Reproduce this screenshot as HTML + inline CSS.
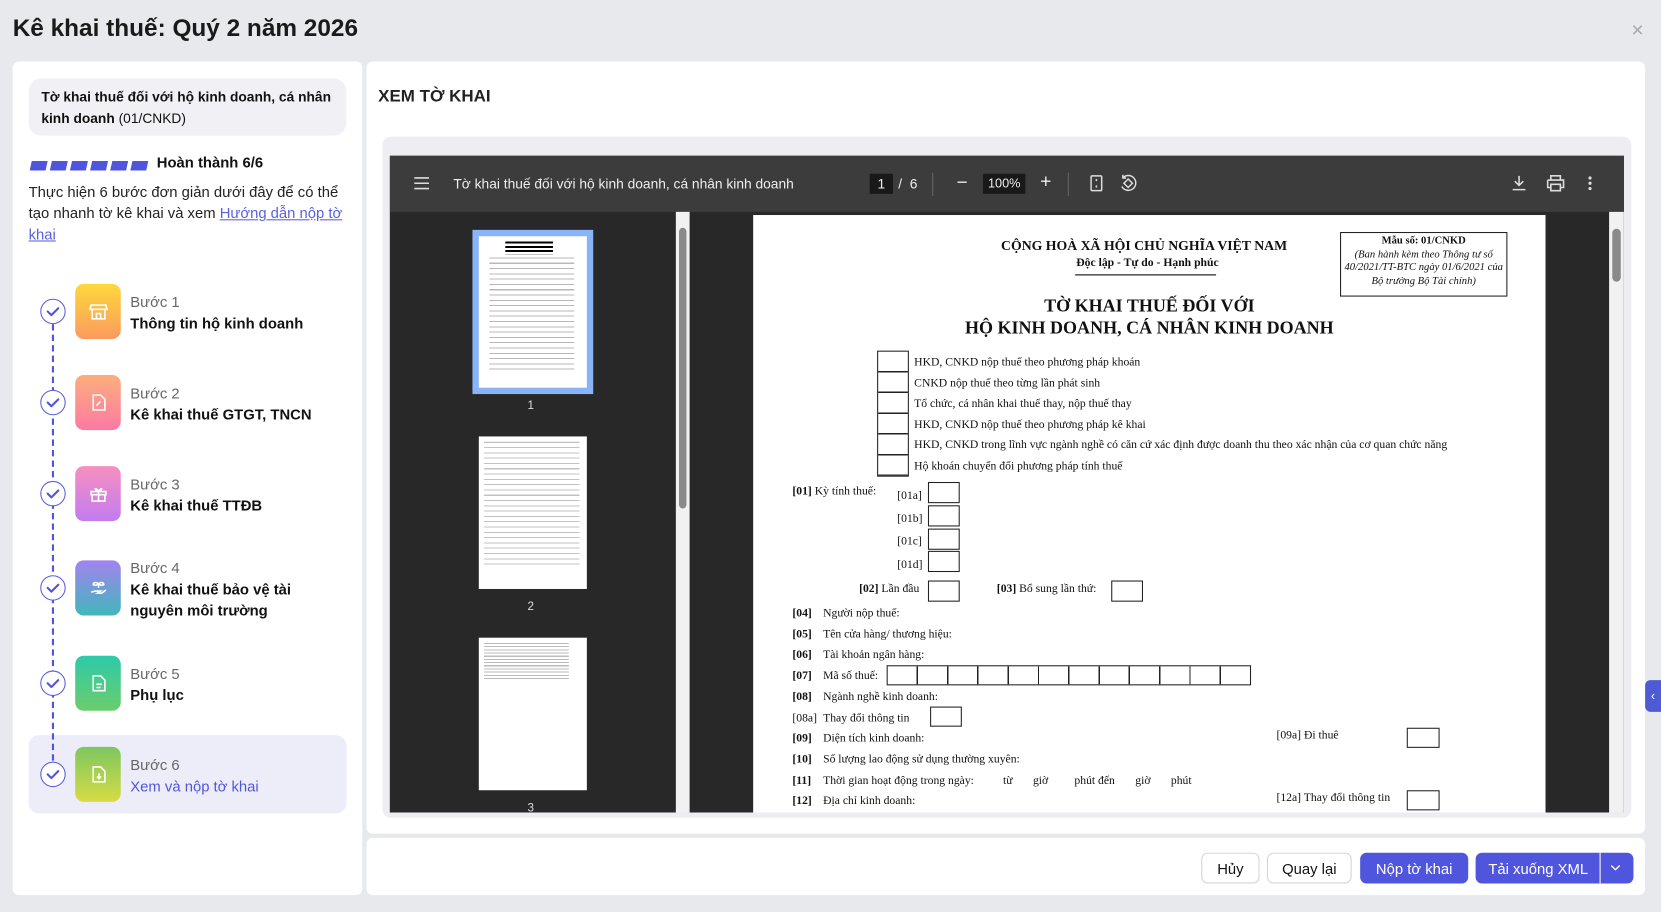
<!DOCTYPE html>
<html><head><meta charset="utf-8"><style>
*{box-sizing:border-box;margin:0;padding:0}
html,body{width:1661px;height:912px;overflow:hidden;background:#e8e9ed}
#w{position:absolute;left:0;top:0;width:1568px;height:861px;transform:scale(1.05931);transform-origin:0 0;font-family:"Liberation Sans",Arial,sans-serif;color:#111}
.a{position:absolute}
.sf{font-family:"Liberation Serif","Times New Roman",serif;color:#111;white-space:nowrap}
.bx{position:absolute;border:1.3px solid #222;background:#fff}
.ic{position:absolute;left:71px;width:43px;height:52px;border-radius:8px;display:flex;align-items:center;justify-content:center}
.ck{position:absolute;left:38px;width:24px;height:24px;border:1.5px solid #5a5fdc;border-radius:50%;background:#fff}
.st{position:absolute;left:123px;font-size:14px;line-height:20px}
.st .g{color:#666}
.st b{font-weight:700;color:#111}
.btn{position:absolute;top:805px;height:29px;border-radius:6px;font-size:14px;display:flex;align-items:center;justify-content:center}
.tb{color:#eee;font-size:13px}
</style></head><body><div id="w">
<div class="a" style="left:12px;top:13px;font-size:23px;font-weight:700;color:#1a1a1a">Kê khai thuế: Quý 2 năm 2026</div>
<div class="a" style="left:1540px;top:18px;font-size:20px;color:#aaa">×</div>

<div class="a" style="left:12px;top:58px;width:330px;height:787px;background:#fff;border-radius:6px"></div>
<div class="a" style="left:27px;top:74px;width:300px;height:54px;background:#f1f1f5;border-radius:12px;padding:8px 12px;font-size:13px;line-height:20px"><b>Tờ khai thuế đối với hộ kinh doanh, cá nhân kinh doanh</b> (01/CNKD)</div>
<div class="a" style="left:28px;top:148px">
<svg width="112" height="9"><g fill="#5055dd"><polygon points="2,0 17,0 15,9 0,9"/><polygon points="21,0 36,0 34,9 19,9"/><polygon points="40,0 55,0 53,9 38,9"/><polygon points="59,0 74,0 72,9 57,9"/><polygon points="78,0 93,0 91,9 76,9"/><polygon points="97,0 112,0 110,9 95,9"/></g></svg></div>
<div class="a" style="left:148px;top:145px;font-size:14px;font-weight:700">Hoàn thành 6/6</div>
<div class="a" style="left:27px;top:171px;width:300px;font-size:14px;line-height:20px;color:#222">Thực hiện 6 bước đơn giản dưới đây để có thể tạo nhanh tờ kê khai và xem <span style="color:#5a5fdc;text-decoration:underline">Hướng dẫn nộp tờ khai</span></div>

<div class="a" style="left:27px;top:694px;width:300px;height:74px;background:#ededfa;border-radius:10px"></div>
<div class="a" style="left:49px;top:306px;height:412px;border-left:2px dashed #5055dd"></div>

<div class="ck" style="top:282px"></div><div class="ck" style="top:368px"></div><div class="ck" style="top:454px"></div><div class="ck" style="top:543px"></div><div class="ck" style="top:633px"></div><div class="ck" style="top:719px"></div>
<svg class="a" style="left:38px;top:0" width="24" height="760"><g fill="none" stroke="#5055dd" stroke-width="2" stroke-linecap="round" stroke-linejoin="round"><path d="M7 294l3.5 3.5 6.5-6.5"/><path d="M7 380l3.5 3.5 6.5-6.5"/><path d="M7 466l3.5 3.5 6.5-6.5"/><path d="M7 555l3.5 3.5 6.5-6.5"/><path d="M7 645l3.5 3.5 6.5-6.5"/><path d="M7 731l3.5 3.5 6.5-6.5"/></g></svg>

<div class="ic" style="top:268px;background:linear-gradient(#fdd93a,#fb9a5e)"><svg width="18" height="18" fill="none" stroke="#fff" stroke-width="1.5"><path d="M2 3h14l1 4H1zM3 7v9h12V7M7 16v-5h4v5"/></svg></div>
<div class="ic" style="top:354px;background:linear-gradient(#fdae7c,#fb7aa3)"><svg width="18" height="18" fill="none" stroke="#fff" stroke-width="1.5"><path d="M4 2h7l4 4v10H4zM7 12l4-4"/></svg></div>
<div class="ic" style="top:440px;background:linear-gradient(#f78fbf,#c27cf0)"><svg width="18" height="18" fill="none" stroke="#fff" stroke-width="1.5"><path d="M2 7h14v3H2zM3 10v6h12v-6M9 7v9M9 7C6 2 4 5 9 7c5-2 3-5 0 0"/></svg></div>
<div class="ic" style="top:529px;background:linear-gradient(#a283ef,#42b6bc)"><svg width="18" height="18" fill="none" stroke="#fff" stroke-width="1.5"><path d="M9 9V4M9 5c-3-2-5-1-5 1 3 1 4 0 5-1zm0 0c3-2 5-1 5 1-3 1-4 0-5-1M2 13l4-1h5l-3 2h4l4-3"/></svg></div>
<div class="ic" style="top:619px;background:linear-gradient(#2ccba8,#6ccc6c)"><svg width="18" height="18" fill="none" stroke="#fff" stroke-width="1.5"><path d="M4 2h7l4 4v10H4zM7 10h5M7 13h4"/></svg></div>
<div class="ic" style="top:705px;background:linear-gradient(#7ec660,#d7dc45)"><svg width="18" height="18" fill="none" stroke="#fff" stroke-width="1.5"><path d="M4 2h7l4 4v10H4zM9.5 8v5M7.5 11l2 2 2-2"/></svg></div>

<div class="st" style="top:275px"><span class="g">Bước 1</span><br><b>Thông tin hộ kinh doanh</b></div>
<div class="st" style="top:361px"><span class="g">Bước 2</span><br><b>Kê khai thuế GTGT, TNCN</b></div>
<div class="st" style="top:447px"><span class="g">Bước 3</span><br><b>Kê khai thuế TTĐB</b></div>
<div class="st" style="top:526px"><span class="g">Bước 4</span><br><b>Kê khai thuế bảo vệ tài<br>nguyên môi trường</b></div>
<div class="st" style="top:626px"><span class="g">Bước 5</span><br><b>Phụ lục</b></div>
<div class="st" style="top:712px"><span class="g">Bước 6</span><br><span style="color:#5055dd">Xem và nộp tờ khai</span></div>

<div class="a" style="left:346px;top:58px;width:1207px;height:729px;background:#fff;border-radius:6px"></div>
<div class="a" style="left:346px;top:791px;width:1207px;height:54px;background:#fff;border-radius:6px"></div>
<div class="a" style="left:357px;top:83px;font-size:16px;font-weight:700;color:#222">XEM TỜ KHAI</div>
<div class="a" style="left:361px;top:129px;width:1179px;height:643px;background:#ededf2;border-radius:8px"></div>
<div class="a" style="left:368px;top:147px;width:1165px;height:620px;background:#282828;overflow:hidden">
 <div class="a" style="left:0;top:0;width:1165px;height:53px;background:#3c3c3c"></div>
 <svg class="a" style="left:23px;top:20px" width="14" height="12"><path d="M0 1h14M0 6h14M0 11h14" stroke="#ddd" stroke-width="1.5"/></svg>
 <div class="a tb" style="left:60px;top:19px">Tờ khai thuế đối với hộ kinh doanh, cá nhân kinh doanh</div>
 <div class="a tb" style="left:453px;top:17px;width:22px;height:19px;background:#191919;text-align:center;line-height:19px">1</div>
 <div class="a tb" style="left:480px;top:19px">/ &nbsp;6</div>
 <div class="a" style="left:512px;top:16px;width:1px;height:22px;background:#666"></div>
 <div class="a tb" style="left:535px;top:15px;font-size:18px">−</div>
 <div class="a tb" style="left:560px;top:17px;width:40px;height:19px;background:#191919;text-align:center;line-height:19px;font-size:12px">100%</div>
 <div class="a tb" style="left:614px;top:14px;font-size:18px">+</div>
 <div class="a" style="left:640px;top:16px;width:1px;height:22px;background:#666"></div>
 <svg class="a" style="left:660px;top:18px" width="14" height="16" fill="none" stroke="#ddd" stroke-width="1.4"><rect x="2" y="1" width="10" height="14" rx="1"/><path d="M7 4v2M7 10v2"/></svg>
 <svg class="a" style="left:688px;top:17px" width="18" height="18" fill="none" stroke="#ddd" stroke-width="1.4"><path d="M9 5l4 4-4 4-4-4zM4 4a7 7 0 1 1-1 8M4 1v3h3"/></svg>
 <svg class="a" style="left:1059px;top:18px" width="14" height="16" fill="none" stroke="#ddd" stroke-width="1.5"><path d="M7 1v9M3 6l4 4 4-4M1 14h12"/></svg>
 <svg class="a" style="left:1092px;top:18px" width="17" height="16" fill="none" stroke="#ddd" stroke-width="1.5"><path d="M4 5V1h9v4M1 5h15v7h-3M4 12H1V5M4 9h9v6H4z"/></svg>
 <svg class="a" style="left:1131px;top:19px" width="4" height="14" fill="#ddd"><circle cx="2" cy="2" r="1.5"/><circle cx="2" cy="7" r="1.5"/><circle cx="2" cy="12" r="1.5"/></svg>
 <div class="a" style="left:78px;top:70px;width:114px;height:155px;background:#8ab4f8"></div>
 <div class="a" style="left:84px;top:76px;width:102px;height:143px;background:#fff">
  <div class="a" style="left:25px;top:5px;width:45px;height:12px;background:repeating-linear-gradient(#000 0 2px,#fff 2px 4px)"></div>
  <div class="a" style="left:10px;top:20px;width:80px;height:110px;background:repeating-linear-gradient(#888 0 1px,#fff 1px 5px);opacity:.6"></div>
 </div>
 <div class="a" style="left:130px;top:230px;color:#ddd;font-size:11px">1</div>
 <div class="a" style="left:84px;top:265px;width:102px;height:144px;background:#fff"><div class="a" style="left:5px;top:5px;width:90px;height:120px;background:repeating-linear-gradient(#999 0 1px,#fff 1px 5px);opacity:.6"></div></div>
 <div class="a" style="left:130px;top:420px;color:#ddd;font-size:11px">2</div>
 <div class="a" style="left:84px;top:455px;width:102px;height:144px;background:#fff"><div class="a" style="left:5px;top:5px;width:80px;height:35px;background:repeating-linear-gradient(#bbb 0 1px,#fff 1px 3px)"></div></div>
 <div class="a" style="left:130px;top:610px;color:#ddd;font-size:11px">3</div>
 <div class="a" style="left:270px;top:53px;width:13px;height:567px;background:#f1f1f1"><div class="a" style="left:3px;top:15px;width:7px;height:265px;background:#8a8a8a;border-radius:4px"></div></div>
 <div class="a" style="left:1151px;top:53px;width:14px;height:567px;background:#f1f1f1"><div class="a" style="left:3px;top:16px;width:8px;height:50px;background:#8a8a8a;border-radius:4px"></div></div>
 <div class="a" style="left:343px;top:56px;width:748px;height:570px;background:#fff">
  <div class="a sf" style="left:234px;top:21px;font-size:13px;font-weight:700">CỘNG HOÀ XÃ HỘI CHỦ NGHĨA VIỆT NAM</div>
  <div class="a sf" style="left:305px;top:39px;font-size:11px;font-weight:700">Độc lập - Tự do - Hạnh phúc</div>
  <div class="a" style="left:304px;top:56px;width:133px;border-top:1px solid #000"></div>
  <div class="a" style="left:554px;top:16px;width:158px;height:61px;border:1.3px solid #222;text-align:center;font-family:'Liberation Serif',serif;font-size:10px;line-height:12.5px;padding-top:2px"><b>Mẫu số: 01/CNKD</b><br><i>(Ban hành kèm theo Thông tư số 40/2021/TT-BTC ngày 01/6/2021 của Bộ trưởng Bộ Tài chính)</i></div>
  <div class="a sf" style="left:0;width:748px;top:75px;text-align:center;font-size:17px;line-height:21px;font-weight:700">TỜ KHAI THUẾ ĐỐI VỚI<br>HỘ KINH DOANH, CÁ NHÂN KINH DOANH</div>

  <div class="bx" style="left:117px;top:128px;width:30px;height:119px;background:repeating-linear-gradient(#fff 0 18px,#222 18px 19.6px)"></div>
  <div class="a sf" style="left:152px;top:130px;font-size:11px;line-height:19.6px">HKD, CNKD nộp thuế theo phương pháp khoán<br>CNKD nộp thuế theo từng lần phát sinh<br>Tổ chức, cá nhân khai thuế thay, nộp thuế thay<br>HKD, CNKD nộp thuế theo phương pháp kê khai<br>HKD, CNKD trong lĩnh vực ngành nghề có căn cứ xác định được doanh thu theo xác nhận của cơ quan chức năng<br>Hộ khoán chuyển đổi phương pháp tính thuế</div>

  <div class="a sf" style="left:37px;top:255px;font-size:11px"><b>[01]</b> Kỳ tính thuế:</div>
  <div class="a sf" style="left:136px;top:255px;font-size:11px;line-height:21.6px">[01a]<br>[01b]<br>[01c]<br>[01d]</div>
  <div class="bx" style="left:165px;top:252px;width:30px;height:20px"></div>
  <div class="bx" style="left:165px;top:274px;width:30px;height:20px"></div>
  <div class="bx" style="left:165px;top:296px;width:30px;height:20px"></div>
  <div class="bx" style="left:165px;top:317px;width:30px;height:20px"></div>
  <div class="a sf" style="left:100px;top:347px;font-size:11px"><b>[02]</b> Lần đầu</div>
  <div class="bx" style="left:165px;top:345px;width:30px;height:20px"></div>
  <div class="a sf" style="left:230px;top:347px;font-size:11px"><b>[03]</b> Bổ sung lần thứ:</div>
  <div class="bx" style="left:338px;top:345px;width:30px;height:20px"></div>

  <div class="a sf" style="left:37px;top:367px;font-size:11px;line-height:19.7px"><b>[04]</b><br><b>[05]</b><br><b>[06]</b><br><b>[07]</b><br><b>[08]</b><br>[08a]<br><b>[09]</b><br><b>[10]</b><br><b>[11]</b><br><b>[12]</b></div>
  <div class="a sf" style="left:66px;top:367px;font-size:11px;line-height:19.7px">Người nộp thuế:<br>Tên cửa hàng/ thương hiệu:<br>Tài khoản ngân hàng:<br>Mã số thuế:<br>Ngành nghề kinh doanh:<br>Thay đổi thông tin<br>Diện tích kinh doanh:<br>Số lượng lao động sử dụng thường xuyên:<br>Thời gian hoạt động trong ngày: &nbsp; &nbsp; &nbsp; &nbsp; &nbsp;từ &nbsp; &nbsp; &nbsp; giờ &nbsp; &nbsp; &nbsp; &nbsp; phút đến &nbsp; &nbsp; &nbsp; giờ &nbsp; &nbsp; &nbsp; phút<br>Địa chỉ kinh doanh:</div>
  <div class="bx" style="left:126px;top:425px;width:344px;height:19px;background:repeating-linear-gradient(90deg,#fff 0 27.3px,#222 27.3px 28.6px)"></div>
  <div class="bx" style="left:167px;top:464px;width:30px;height:19px"></div>
  <div class="a sf" style="left:494px;top:485px;font-size:11px">[09a] Đi thuê</div>
  <div class="bx" style="left:617px;top:484px;width:31px;height:19px"></div>
  <div class="a sf" style="left:494px;top:544px;font-size:11px">[12a] Thay đổi thông tin</div>
  <div class="bx" style="left:617px;top:543px;width:31px;height:19px"></div>
 </div>
</div>
<div class="a" style="left:1553px;top:642px;width:15px;height:30px;background:#4f5bd5;border-radius:5px 0 0 5px;color:#fff;font-size:12px;line-height:30px;text-align:center">‹</div>

<div class="btn" style="left:1134px;width:55px;border:1px solid #d4d4dc;background:#fff">Hủy</div>
<div class="btn" style="left:1196px;width:80px;border:1px solid #d4d4dc;background:#fff">Quay lại</div>
<div class="btn" style="left:1284px;width:102px;background:#5055dd;color:#fff">Nộp tờ khai</div>
<div class="btn" style="left:1393px;width:149px;background:#5055dd;color:#fff;justify-content:flex-start;padding-left:12px">Tải xuống XML</div>
<div class="a" style="left:1510px;top:805px;width:1px;height:29px;background:#fff"></div>
<svg class="a" style="left:1520px;top:815px" width="10" height="8"><path d="M1 2l4 4 4-4" fill="none" stroke="#fff" stroke-width="1.3"/></svg>
</div></body></html>
